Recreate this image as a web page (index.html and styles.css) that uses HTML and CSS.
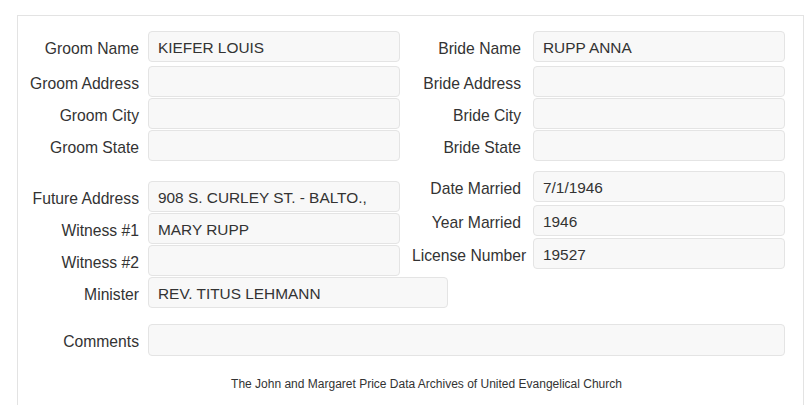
FILE: index.html
```html
<!DOCTYPE html>
<html lang="en">
<head>
    <meta charset="UTF-8">
    <meta name="viewport" content="width=device-width, initial-scale=1.0">
    <title>Marriage Record</title>
    <link rel="stylesheet" href="styles.css">
</head>
<body>

    <!-- record panel -->
    <div class="panel">

        <!-- groom / bride -->
        <div class="pairs">
            <div class="row">
                <label class="label-left">Groom Name</label>
                <input class="field" type="text" value="KIEFER LOUIS" readonly>
                <label class="label-right">Bride Name</label>
                <input class="field" type="text" value="RUPP ANNA" readonly>
            </div>
            <div class="row">
                <label class="label-left">Groom Address</label>
                <input class="field" type="text" value="" readonly>
                <label class="label-right">Bride Address</label>
                <input class="field" type="text" value="" readonly>
            </div>
            <div class="row">
                <label class="label-left">Groom City</label>
                <input class="field" type="text" value="" readonly>
                <label class="label-right">Bride City</label>
                <input class="field" type="text" value="" readonly>
            </div>
            <div class="row">
                <label class="label-left">Groom State</label>
                <input class="field" type="text" value="" readonly>
                <label class="label-right">Bride State</label>
                <input class="field" type="text" value="" readonly>
            </div>
        </div>

        <!-- details -->
        <div class="details">
            <div class="stack stack-left">
                <div class="row">
                    <label class="label-left">Future Address</label>
                    <input class="field" type="text" value="908 S. CURLEY ST. - BALTO.," readonly>
                </div>
                <div class="row">
                    <label class="label-left">Witness #1</label>
                    <input class="field" type="text" value="MARY RUPP" readonly>
                </div>
                <div class="row">
                    <label class="label-left">Witness #2</label>
                    <input class="field" type="text" value="" readonly>
                </div>
                <div class="row">
                    <label class="label-left">Minister</label>
                    <input class="field field-wide" type="text" value="REV. TITUS LEHMANN" readonly>
                </div>
            </div>
            <div class="stack stack-right">
                <div class="row row-date">
                    <label class="label-right">Date Married</label>
                    <input class="field" type="text" value="7/1/1946" readonly>
                </div>
                <div class="row row-year">
                    <label class="label-right">Year Married</label>
                    <input class="field" type="text" value="1946" readonly>
                </div>
                <div class="row">
                    <label class="label-right">License Number</label>
                    <input class="field" type="text" value="19527" readonly>
                </div>
            </div>
        </div>

        <!-- comments -->
        <div class="row row-comments">
            <label class="label-left">Comments</label>
            <input class="field field-full" type="text" value="" readonly>
        </div>

        <div class="footer">The John and Margaret Price Data Archives of United Evangelical Church</div>
    </div>

</body>
</html>
```

FILE: styles.css
```css
body {
    font-family: "Liberation Sans", Arial, sans-serif;
    background-color: #ffffff;
    color: #333333;
    margin: 0;
    padding: 0;
    overflow: hidden;
}

/* panel */
.panel {
    box-sizing: border-box;
    width: 787px;
    height: 390px;
    margin: 15px 0 0 17px;
    padding-top: 15px;
    border: 1px solid #e3e3e3;
    border-bottom: none;
}

.row {
    display: flex;
    align-items: center;
    height: 31px;
    margin-bottom: 1px;
}

.pairs .row:first-child {
    margin-bottom: 4px;
}

label {
    flex-shrink: 0;
    font-size: 15.7px;
    white-space: nowrap;
    text-align: right;
    padding-top: 4px;
    box-sizing: border-box;
}

.label-left {
    width: 130px;
    padding-right: 9px;
}

.label-right {
    width: 133px;
    padding-left: 12px;
    padding-right: 12px;
}

/* inputs */
.field {
    flex-shrink: 0;
    box-sizing: border-box;
    width: 252px;
    height: 31px;
    margin: 0;
    padding: 2px 9px 0;
    font-family: "Liberation Sans", Arial, sans-serif;
    font-size: 15.4px;
    color: #333333;
    background-color: #f8f8f8;
    border: 1px solid #e4e4e4;
    border-radius: 4px;
    outline: none;
}

.field-wide {
    width: 300px;
}

.field-full {
    width: 637px;
    height: 32px;
}

/* details */
.details {
    display: flex;
    margin-top: 10px;
}

.stack-left {
    flex-shrink: 0;
    width: 382px;
    padding-top: 10px;
}

.row-date {
    margin-bottom: 3px;
}

.row-year {
    margin-bottom: 2px;
}

.row-comments {
    height: 32px;
    margin-top: 15px;
}

.footer {
    margin-top: 21px;
    padding-left: 32px;
    text-align: center;
    font-size: 12px;
    line-height: 14px;
}
```
